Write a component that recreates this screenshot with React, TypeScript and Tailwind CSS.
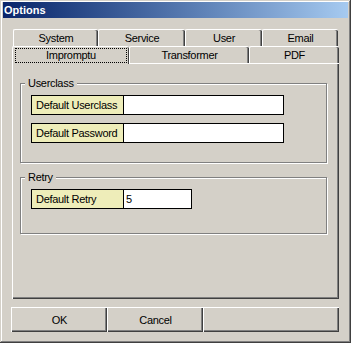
import React from "react"

const font = { fontFamily: '"Liberation Sans", Arial, sans-serif' }

type TabProps = {
  label: string
  width: string
  selected?: boolean
}

function Tab(props: TabProps) {
  if (props.selected) {
    return (
      <div className={`${props.width} relative z-10 -mb-px h-[18px] rounded-t-[2px] border-l border-t border-white bg-[#d4d0c8] px-[2px] pt-[1px] shadow-[inset_-1px_0_#404040]`}>
        <div className="flex h-[15px] items-center justify-center border border-dotted border-black text-[11px] tracking-[-0.3px] text-black">
          {props.label}
        </div>
      </div>
    )
  }
  return (
    <div className={`${props.width} flex h-[17px] items-center justify-center rounded-t-[2px] border-l border-t border-white bg-[#d4d0c8] pt-[1px] text-[11px] tracking-[-0.3px] text-black shadow-[inset_-1px_0_#404040,inset_-2px_0_#808080]`}>
      {props.label}
    </div>
  )
}

type FieldProps = {
  label: string
  value?: string
  width: string
}

function Field(props: FieldProps) {
  return (
    <div className={`${props.width} flex h-[20px] border border-black`}>
      <div className="flex w-[92px] shrink-0 items-center border-r border-black bg-[#eeedb9] pl-[4px] text-[11px] tracking-[-0.3px] text-black">
        {props.label}
      </div>
      <div className="flex flex-1 items-center bg-white pl-[2px] text-[11px] text-black">{props.value}</div>
    </div>
  )
}

type GroupProps = {
  title: string
  height: string
  children: React.ReactNode
}

function Group(props: GroupProps) {
  return (
    <fieldset className={`${props.height} ml-[7px] w-[307px] border border-[#808080] shadow-[1px_1px_0_#fff,inset_1px_1px_0_#fff]`}>
      <legend className="ml-[4px] bg-[#d4d0c8] px-[3px] text-[11px] leading-[13px] tracking-[-0.3px] text-black">{props.title}</legend>
      <div className="flex flex-col gap-[8px] pl-[10px] pt-[5px]">{props.children}</div>
    </fieldset>
  )
}

function Button(props: { label: string; width: string }) {
  return (
    <div className={`${props.width} flex h-[25px] items-center justify-center border-l border-t border-white text-[11px] tracking-[-0.3px] text-black shadow-[inset_-1px_-1px_#404040,inset_-2px_-2px_#808080]`}>
      {props.label}
    </div>
  )
}

export default function App() {
  return (
    <div style={font} className="flex h-[343px] w-[351px] flex-col bg-[#d4d0c8] shadow-[inset_-1px_-1px_#404040,inset_1px_1px_#d4d0c8,inset_-2px_-2px_#808080,inset_2px_2px_#fff]">
      <div className="mx-[3px] mt-[2px] flex h-[16px] items-center bg-gradient-to-r from-[#0a246a] to-[#a6caf0] pl-[1px] text-[11px] font-bold text-white">
        Options
      </div>

      <div className="mt-[11px] flex flex-col px-[12px]">
        <div className="flex pl-[1px]">
          <Tab label="System" width="w-[85px]" />
          <Tab label="Service" width="w-[87px]" />
          <Tab label="User" width="w-[77px]" />
          <Tab label="Email" width="w-[76px]" />
        </div>
        <div className="flex">
          <Tab label="Impromptu" width="w-[117px]" selected />
          <Tab label="Transformer" width="w-[120px]" />
          <Tab label="PDF" width="w-[90px]" />
        </div>

        <div className="flex h-[236px] flex-col border-l border-t border-white pt-[13px] shadow-[inset_-1px_-1px_#404040,inset_-2px_-2px_#808080]">
          <Group title="Userclass" height="h-[86px]">
            <Field label="Default Userclass" width="w-[253px]" />
            <Field label="Default Password" width="w-[253px]" />
          </Group>
          <div className="h-[8px]" />
          <Group title="Retry" height="h-[63px]">
            <Field label="Default Retry" value="5" width="w-[161px]" />
          </Group>
        </div>

        <div className="-ml-px mt-[8px] flex">
          <Button label="OK" width="w-[96px]" />
          <Button label="Cancel" width="w-[96px]" />
          <Button label="" width="w-[136px]" />
        </div>
      </div>
    </div>
  )
}
